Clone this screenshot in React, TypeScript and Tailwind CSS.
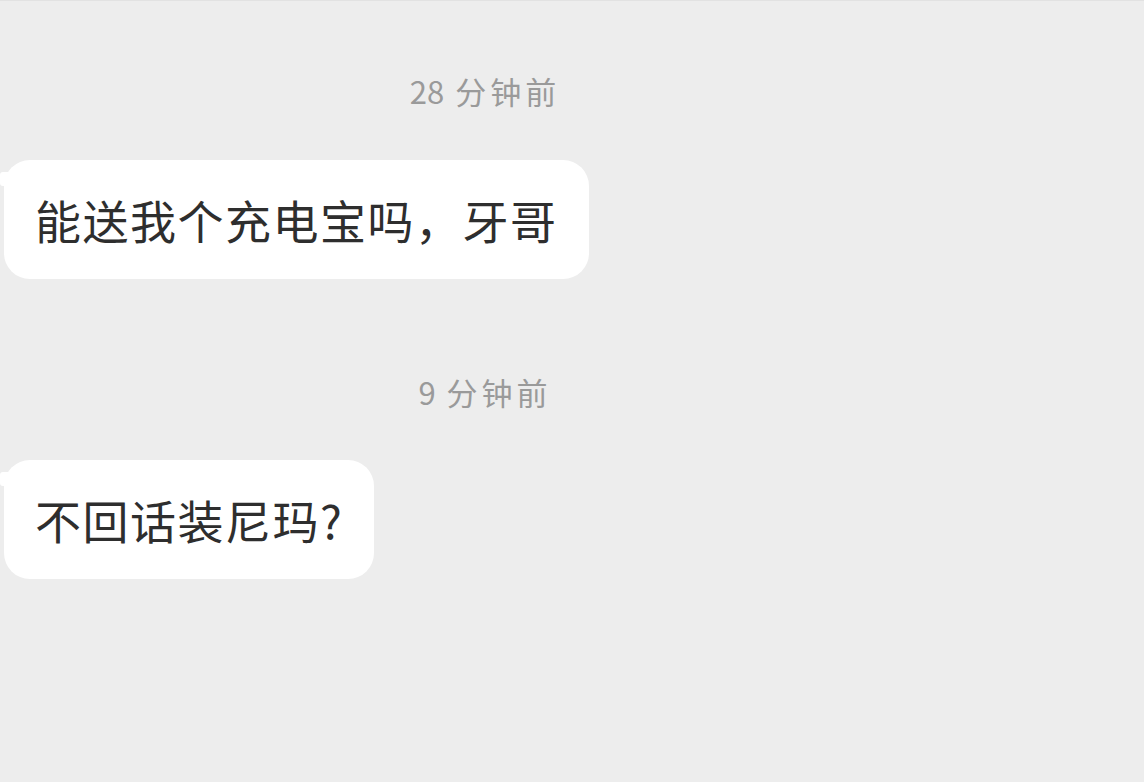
const font = { fontFamily: '"Noto Sans CJK SC", "Noto Sans", sans-serif' };

function Time({ num }: { num: string }) {
  return (
    <div className="w-[970px] text-center text-[31px] leading-[40px] text-[#9a9a9a]">
      <span>{num}</span>
      <span className="tracking-[4px]"> 分钟前</span>
    </div>
  );
}

function Bubble({ text }: { text: string }) {
  return (
    <div className="relative ml-[4px] self-start">
      <div className="absolute -left-[4px] top-[12px] h-[14px] w-[10px] rounded-l-[3px] bg-white" />
      <div className="rounded-[26px] bg-white pl-[31px] pr-[31px] h-[119px] flex items-center text-[46px] text-[#2e2e2e] tracking-[1.5px]">
        {text}
      </div>
    </div>
  );
}

export default function App() {
  return (
    <div
      className="h-[782px] w-[1144px] overflow-hidden bg-[#ededed] flex flex-col border-t border-[#e2e2e2]"
      style={font}
    >
      <div className="mt-[70px]">
        <Time num="28" />
      </div>
      <div className="mt-[49px] flex flex-col">
        <Bubble text="能送我个充电宝吗，牙哥" />
      </div>
      <div className="mt-[93px]">
        <Time num="9" />
      </div>
      <div className="mt-[48px] flex flex-col">
        <Bubble text="不回话装尼玛?" />
      </div>
    </div>
  );
}
